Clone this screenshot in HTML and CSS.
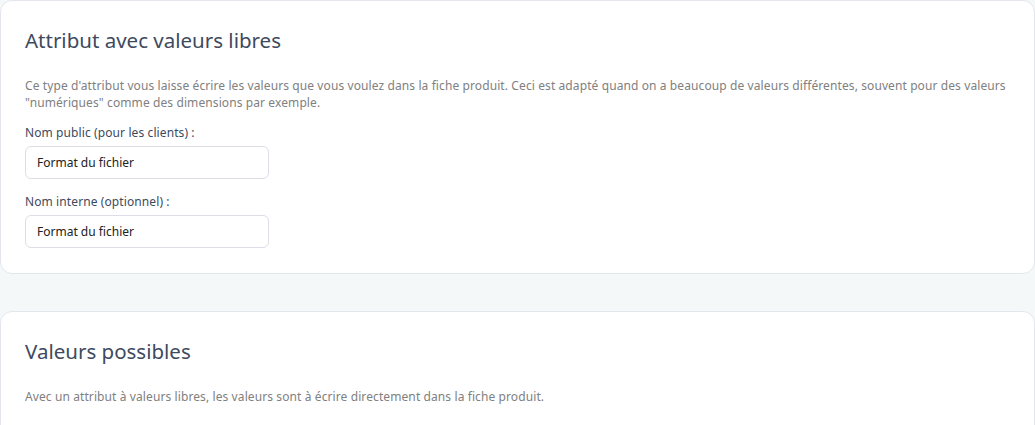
FILE: index.html
```html
<!DOCTYPE html>
<html lang="fr">
<head>
  <meta charset="UTF-8">
  <meta name="viewport" content="width=device-width, initial-scale=1.0">
  <title>Attribut avec valeurs libres</title>
  <link rel="stylesheet" href="styles.css">
</head>
<body>
  <div class="page">
    <div class="card">
      <h2>Attribut avec valeurs libres</h2>
      <p class="help">Ce type d'attribut vous laisse écrire les valeurs que vous voulez dans la fiche produit. Ceci est adapté quand on a beaucoup de valeurs différentes, souvent pour des valeurs "numériques" comme des dimensions par exemple.</p>
      <div class="field">
        <label for="nom-public">Nom public (pour les clients) :</label>
        <input type="text" id="nom-public" value="Format du fichier">
      </div>
      <div class="field">
        <label for="nom-interne">Nom interne (optionnel) :</label>
        <input type="text" id="nom-interne" value="Format du fichier">
      </div>
    </div>

    <div class="card">
      <h2>Valeurs possibles</h2>
      <p class="help">Avec un attribut à valeurs libres, les valeurs sont à écrire directement dans la fiche produit.</p>
    </div>
  </div>
</body>
</html>
```

FILE: styles.css
```css
/* reset */
* {
  margin: 0;
  padding: 0;
  box-sizing: border-box;
}

body {
  font-family: "Noto Sans", "Open Sans", Arial, sans-serif;
  background-color: #f5f8f9;
  color: #333;
}

.page {
  display: flex;
  flex-direction: column;
  gap: 37px;
}

.card {
  background-color: #fff;
  border: 1px solid #e3e7ed;
  border-radius: 12px;
  padding: 26px 24px 25px;
}

.card h2 {
  font-size: 20.5px;
  font-weight: 400;
  line-height: 26px;
  color: #3e4a5e;
  margin-bottom: 24px;
}

.help {
  font-size: 12px;
  line-height: 17px;
  letter-spacing: 0.1px;
  color: #808080;
  margin-bottom: 13px;
}

.field {
  margin-bottom: 14px;
}

.field:last-child {
  margin-bottom: 0;
}

.field label {
  display: block;
  font-size: 12px;
  line-height: 17px;
  letter-spacing: 0.1px;
  color: #3d4a5e;
  margin-bottom: 5px;
}

.field input {
  display: block;
  width: 244px;
  height: 33px;
  padding: 0 11px;
  border: 1px solid #dcdde6;
  border-radius: 6px;
  font-family: inherit;
  font-size: 12px;
  color: #222;
  background: #fff;
  outline: none;
}
```
